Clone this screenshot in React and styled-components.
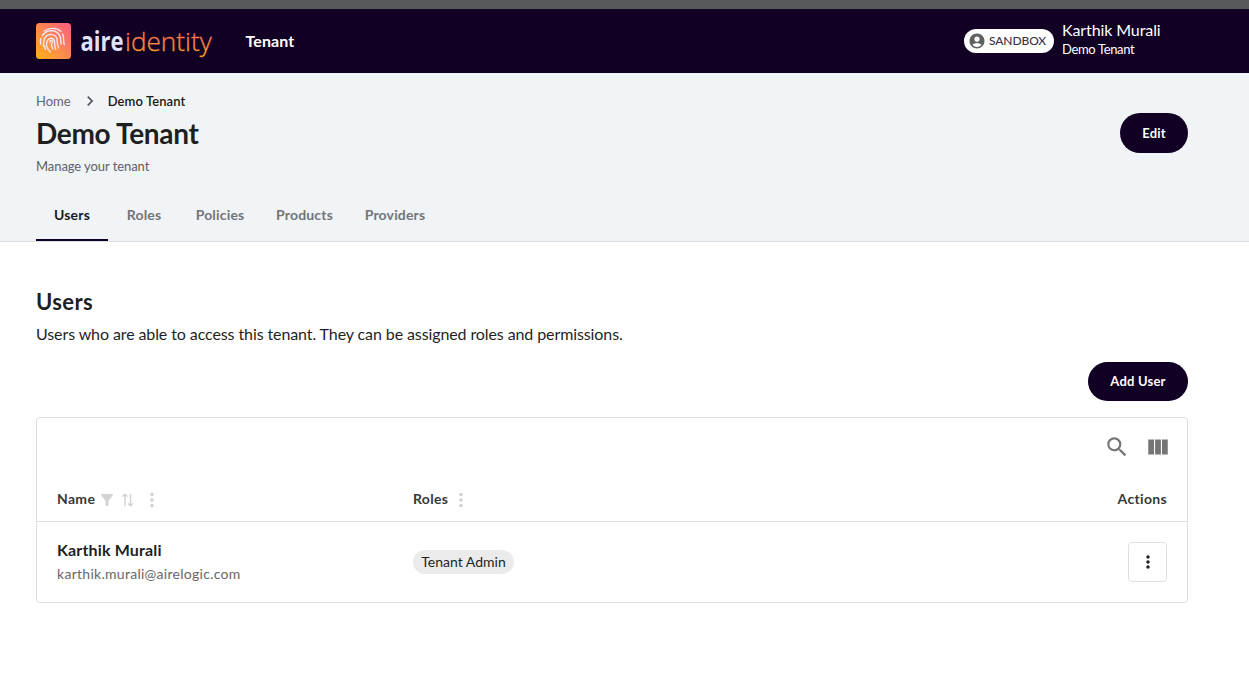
import React from "react";
import styled, { createGlobalStyle } from "styled-components";
import {
  MdAccountCircle,
  MdSearch,
  MdViewColumn,
  MdFilterAlt,
  MdMoreVert,
  MdChevronRight,
} from "react-icons/md";

const GlobalStyle = createGlobalStyle`
  *, *::before, *::after { box-sizing: border-box; }
  body {
    margin: 0;
    background: #fff;
    color: #1f1f1f;
    font-family: Lato, "Open Sans", sans-serif;
    font-size: 16px;
    overflow: hidden;
  }
  h1, h2, p { margin: 0; }
  button { font-family: inherit; cursor: pointer; padding: 0; }
  svg { display: block; flex: none; }
`;

const TopStrip = styled.div`
  height: 9px;
  background: #58595d;
`;

const AppBar = styled.header`
  height: 64px;
  padding: 0 61px 0 36px;
  background: #110023;
  color: #fff;
  display: flex;
  align-items: center;
`;

const AppNavLink = styled.a`
  margin-left: 29.5px;
  font-size: 16px;
  font-weight: 700;
  line-height: 20px;
  letter-spacing: 0.1px;
`;

const Account = styled.div`
  margin-left: auto;
  width: 224px;
  display: flex;
  align-items: center;
  gap: 8px;
`;

const EnvBadge = styled.div`
  width: 90px;
  height: 24px;
  padding-left: 4px;
  border-radius: 12px;
  background: #fff;
  color: #3b3346;
  display: flex;
  align-items: center;
  gap: 3px;
  font-size: 12px;
  line-height: 14px;
  letter-spacing: -0.1px;
  font-weight: 500;
  svg { color: #616161; }
  span { padding-bottom: 1px; }
`;

const AccountText = styled.div`
  display: flex;
  flex-direction: column;
  margin-top: -4px;
`;

const AccountName = styled.span`
  font-size: 16px;
  line-height: 18px;
  letter-spacing: -0.1px;
`;

const AccountTenant = styled.span`
  margin-top: 1px;
  font-size: 13px;
  line-height: 18px;
  letter-spacing: -0.35px;
`;

const PageHeader = styled.section`
  height: 169px;
  padding: 18px 61px 0 36px;
  background: #f0f4f7;
  border-bottom: 1px solid #dadfe3;
  display: flex;
  flex-direction: column;
`;

const HeaderRow = styled.div`
  height: 99px;
  display: flex;
  justify-content: space-between;
`;

const Breadcrumb = styled.nav`
  display: flex;
  align-items: center;
  height: 20px;
  font-size: 13px;
  color: #65676b;
  svg { margin: 0 8px 0 9px; color: #55585c; }
  strong { color: #1a1a1a; font-weight: 600; letter-spacing: 0.1px; }
`;

const PageTitle = styled.h1`
  margin-top: 3px;
  font-size: 28px;
  line-height: 38px;
  font-weight: 700;
  letter-spacing: -0.3px;
`;

const PageSubtitle = styled.p`
  margin-top: 5px;
  font-size: 13px;
  line-height: 18px;
  letter-spacing: -0.07px;
  color: #5f6165;
`;

const PillButton = styled.button`
  width: ${(p) => p.$width};
  height: ${(p) => p.$height};
  margin-top: ${(p) => p.$top || "0"};
  padding-bottom: ${(p) => p.$lift || "0"};
  border: 0;
  border-radius: 20px;
  background: #110023;
  color: #fff;
  font-size: 13px;
  letter-spacing: 0.2px;
  font-weight: 700;
`;

const Tabs = styled.div`
  display: flex;
  height: 51px;
`;

const Tab = styled.div`
  width: ${(p) => p.$width};
  display: flex;
  justify-content: center;
  align-items: center;
  font-size: 14px;
  letter-spacing: 0.17px;
  font-weight: 700;
  border-bottom: 2px solid ${(p) => (p.$active ? "#110023" : "transparent")};
  color: ${(p) => (p.$active ? "#1a1a1a" : "#737578")};
`;

const Content = styled.main`
  padding: 46px 61px 0 36px;
  display: flex;
  flex-direction: column;
`;

const SectionTitle = styled.h2`
  font-size: 22px;
  line-height: 28px;
  font-weight: 700;
  letter-spacing: 0.4px;
`;

const SectionText = styled.p`
  margin-top: 7px;
  font-size: 16px;
  line-height: 22px;
  letter-spacing: -0.1px;
`;

const SectionActions = styled.div`
  display: flex;
  justify-content: flex-end;
  margin: 17px 0 16px;
`;

const TableCard = styled.div`
  height: 186px;
  border: 1px solid #dcdfe2;
  border-radius: 4px;
`;

const TableToolbar = styled.div`
  height: 59px;
  padding: 0 16px 1px;
  display: flex;
  align-items: center;
  justify-content: flex-end;
  gap: 15px;
  color: #757575;
`;

const TableRow = styled.div`
  display: grid;
  grid-template-columns: 356px 1fr auto;
  align-items: center;
  padding: 0 20px;
  height: ${(p) => p.$height};
  border-bottom: ${(p) => (p.$divided ? "1px solid #dcdfe2" : "0")};
`;

const HeadCell = styled.div`
  display: flex;
  align-items: center;
  height: 22px;
  padding-top: 1px;
  font-size: 14px;
  line-height: 18px;
  letter-spacing: 0.32px;
  font-weight: 700;
  color: #383838;
  svg { color: #d3d3d3; }
`;

const HeadLabel = styled.span`
  padding-bottom: 1px;
`;

const HeadIcon = styled.span`
  margin-left: ${(p) => p.$left};
`;

const UserCell = styled.div`
  display: flex;
  flex-direction: column;
`;

const UserName = styled.span`
  font-size: 16px;
  font-weight: 700;
  line-height: 22px;
  letter-spacing: 0.15px;
`;

const UserEmail = styled.span`
  margin-top: 2px;
  font-size: 14px;
  line-height: 22px;
  letter-spacing: 0.28px;
  color: #66676b;
`;

const RoleChip = styled.span`
  display: flex;
  justify-content: center;
  width: 101px;
  height: 24px;
  border-radius: 12px;
  background: #ebebeb;
  font-size: 14px;
  line-height: 23px;
`;

const RowMenuButton = styled.button`
  width: 39px;
  height: 40px;
  border: 1px solid #dcdfe2;
  border-radius: 4px;
  background: #fff;
  color: #1f1f1f;
  display: flex;
  align-items: center;
  justify-content: center;
`;

const Logo = () => (
  <svg width="180" height="42" viewBox="0 0 180 42" role="img" aria-label="aireidentity">
    <defs>
      <linearGradient id="tile" x1="0" y1="1" x2="1" y2="0">
        <stop offset="0" stopColor="#fbb117" />
        <stop offset="0.5" stopColor="#fd8750" />
        <stop offset="1" stopColor="#fe5c80" />
      </linearGradient>
      <linearGradient id="word" gradientUnits="userSpaceOnUse" x1="0" y1="9" x2="0" y2="35">
        <stop offset="0" stopColor="#f5605c" />
        <stop offset="1" stopColor="#f7a42a" />
      </linearGradient>
    </defs>
    <rect x="0" y="3" width="35" height="36" rx="3.5" fill="url(#tile)" />
    <g fill="none" stroke="#efe6f4" strokeWidth="1.4" strokeLinecap="round" strokeLinejoin="round">
      <path d="M8.300 11C13.500 7.400 20.500 7.400 25 11.400" />
      <path d="M4.800 18.500c-.7 2-.6 3.700 0 5.500" />
      <path d="M6.200 15.800C10 9.300 20.500 8.600 24 16c1 2.600.4 5 1.200 8" />
      <path d="M26.600 14c2 3.500 0 7 1.700 10.500" />
      <path d="M7.400 26.200c.6-2.600-.2-5.200 1.200-7.800 2.800-5.400 11.200-5 12.400.6.6 3-.2 5.500 1.600 9" />
      <path d="M14.200 32c-3.600-4-4.500-8-2.900-11.400 2-3.500 6.500-3 7.200.7.3 3-.1 5.200 1.200 8.200" />
      <path d="M13.700 22.500c0-2.800 3-2.900 2.900-.8-.1 1.500-1.500 1.800-1.200 3.500.2 1.300.8 2.400 1.500 3.600" />
      <path d="M9.600 29.500c-.8-1.200-1-2.200-.9-3.500" />
    </g>
    <text
      x="44.500" y="30.500" textLength="43" lengthAdjust="spacingAndGlyphs"
      fontFamily="'Open Sans', sans-serif" fontSize="26" fontWeight="700" fill="#dfe2fb"
    >aire</text>
    <text
      x="89" y="30.500" textLength="86.700" lengthAdjust="spacingAndGlyphs"
      fontFamily="'Open Sans', sans-serif" fontSize="26.500" fontWeight="300" fill="url(#word)"
      stroke="url(#word)" strokeWidth="0.3"
    >identity</text>
  </svg>
);

const SortIcon = () => (
  <svg width="14" height="14" viewBox="0 0 14 14" fill="none" stroke="currentColor" strokeWidth="1.5">
    <path d="M4 13V1.500M1.500 3.500L4 1.200l2.500 2.300M9.500 1v11.500M7 10.500l2.500 2.300 2.500-2.300" />
  </svg>
);

const tabs = [
  { label: "Users", width: "72px" },
  { label: "Roles", width: "72px" },
  { label: "Policies", width: "80px" },
  { label: "Products", width: "89px" },
  { label: "Providers", width: "92px" },
];

export default function App() {
  return (
    <>
      <GlobalStyle />
      <TopStrip />
      <AppBar>
        <Logo />
        <AppNavLink>Tenant</AppNavLink>
        <Account>
          <EnvBadge>
            <MdAccountCircle size={18} />
            <span>SANDBOX</span>
          </EnvBadge>
          <AccountText>
            <AccountName>Karthik Murali</AccountName>
            <AccountTenant>Demo Tenant</AccountTenant>
          </AccountText>
        </Account>
      </AppBar>
      <PageHeader>
        <HeaderRow>
          <div>
            <Breadcrumb>
              <span>Home</span>
              <MdChevronRight size={20} />
              <strong>Demo Tenant</strong>
            </Breadcrumb>
            <PageTitle>Demo Tenant</PageTitle>
            <PageSubtitle>Manage your tenant</PageSubtitle>
          </div>
          <PillButton $width="68px" $height="40px" $top="22px">Edit</PillButton>
        </HeaderRow>
        <Tabs>
          {tabs.map((t, i) => (
            <Tab key={t.label} $width={t.width} $active={i === 0}>{t.label}</Tab>
          ))}
        </Tabs>
      </PageHeader>
      <Content>
        <SectionTitle>Users</SectionTitle>
        <SectionText>
          Users who are able to access this tenant. They can be assigned roles and permissions.
        </SectionText>
        <SectionActions>
          <PillButton $width="100px" $height="39px" $lift="2px">Add User</PillButton>
        </SectionActions>
        <TableCard>
          <TableToolbar>
            <MdSearch size={26} />
            <MdViewColumn size={26} />
          </TableToolbar>
          <TableRow $height="45px" $divided>
            <HeadCell>
              <HeadLabel>Name</HeadLabel>
              <HeadIcon $left="3px"><MdFilterAlt size={18} /></HeadIcon>
              <HeadIcon $left="5px"><SortIcon /></HeadIcon>
              <HeadIcon $left="6px"><MdMoreVert size={22} /></HeadIcon>
            </HeadCell>
            <HeadCell>
              <HeadLabel>Roles</HeadLabel>
              <HeadIcon $left="2px"><MdMoreVert size={22} /></HeadIcon>
            </HeadCell>
            <HeadCell><HeadLabel>Actions</HeadLabel></HeadCell>
          </TableRow>
          <TableRow $height="80px">
            <UserCell>
              <UserName>Karthik Murali</UserName>
              <UserEmail>karthik.murali@airelogic.com</UserEmail>
            </UserCell>
            <RoleChip>Tenant Admin</RoleChip>
            <RowMenuButton aria-label="Row actions"><MdMoreVert size={20} /></RowMenuButton>
          </TableRow>
        </TableCard>
      </Content>
    </>
  );
}
